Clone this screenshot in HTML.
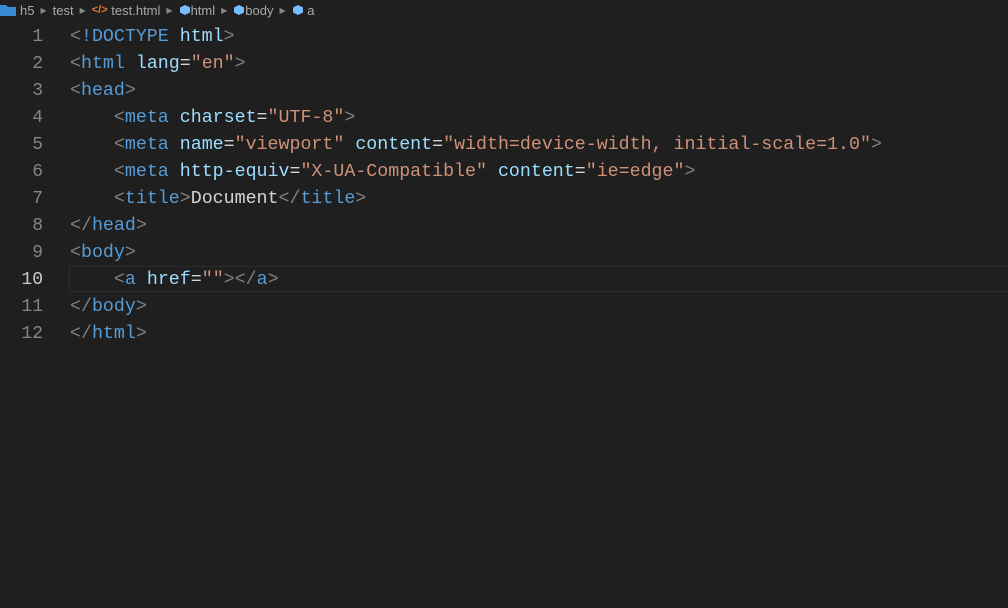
<!DOCTYPE html>
<html><head><style>
body{margin:0;width:1008px;height:608px;background:#1f1f1f;overflow:hidden;font-family:"Liberation Mono",monospace;}
.bc{position:absolute;top:0;left:0;height:20px;font:13px "Liberation Sans",sans-serif;color:#a9a9a9;display:flex;align-items:center;white-space:pre}
.bc .s{color:#888;font-size:8px;margin:0 6px}
.ln{position:absolute;left:0;width:43px;text-align:right;color:#858585;font-size:18px;line-height:27px}
.cd{position:absolute;left:70px;font-size:18.3px;line-height:27px;white-space:pre;color:#d4d4d4}
.t{color:#569cd6}.p{color:#808080}.at{color:#9cdcfe}.st{color:#ce9178}
.hl{position:absolute;left:69px;top:266px;width:945px;height:24px;border:1px solid #2b2b2b}
</style></head><body>
<div class="bc"><svg width="16" height="14" viewBox="0 0 16 14"><path d="M0 2h6l2 2h8v9H0z" fill="#3c8bd6"/></svg><span style="margin-left:4px">h5</span><span class="s">▶</span>test<span class="s">▶</span><span style="color:#e37933;font-weight:bold;font-size:11px">&lt;/&gt;</span> test.html<span class="s">▶</span><svg width="12" height="12" viewBox="0 0 12 12"><path d="M6 1l5 2.5v5L6 11 1 8.5v-5z" fill="#75beff"/></svg>html<span class="s">▶</span><svg width="12" height="12" viewBox="0 0 12 12"><path d="M6 1l5 2.5v5L6 11 1 8.5v-5z" fill="#75beff"/></svg>body<span class="s">▶</span><svg width="12" height="12" viewBox="0 0 12 12"><path d="M6 1l5 2.5v5L6 11 1 8.5v-5z" fill="#75beff"/></svg> a</div>
<div class="hl"></div>
<div class="ln" style="top:24px">1<br>2<br>3<br>4<br>5<br>6<br>7<br>8<br>9<br><span style="color:#ccc">10</span><br>11<br>12</div>
<div class="cd" style="top:24px"><span class="p">&lt;</span><span class="t">!DOCTYPE</span> <span class="at">html</span><span class="p">&gt;</span>
<span class="p">&lt;</span><span class="t">html</span> <span class="at">lang</span>=<span class="st">"en"</span><span class="p">&gt;</span>
<span class="p">&lt;</span><span class="t">head</span><span class="p">&gt;</span>
    <span class="p">&lt;</span><span class="t">meta</span> <span class="at">charset</span>=<span class="st">"UTF-8"</span><span class="p">&gt;</span>
    <span class="p">&lt;</span><span class="t">meta</span> <span class="at">name</span>=<span class="st">"viewport"</span> <span class="at">content</span>=<span class="st">"width=device-width, initial-scale=1.0"</span><span class="p">&gt;</span>
    <span class="p">&lt;</span><span class="t">meta</span> <span class="at">http-equiv</span>=<span class="st">"X-UA-Compatible"</span> <span class="at">content</span>=<span class="st">"ie=edge"</span><span class="p">&gt;</span>
    <span class="p">&lt;</span><span class="t">title</span><span class="p">&gt;</span>Document<span class="p">&lt;/</span><span class="t">title</span><span class="p">&gt;</span>
<span class="p">&lt;/</span><span class="t">head</span><span class="p">&gt;</span>
<span class="p">&lt;</span><span class="t">body</span><span class="p">&gt;</span>
    <span class="p">&lt;</span><span class="t">a</span> <span class="at">href</span>=<span class="st">""</span><span class="p">&gt;&lt;/</span><span class="t">a</span><span class="p">&gt;</span>
<span class="p">&lt;/</span><span class="t">body</span><span class="p">&gt;</span>
<span class="p">&lt;/</span><span class="t">html</span><span class="p">&gt;</span></div>
</body></html>
